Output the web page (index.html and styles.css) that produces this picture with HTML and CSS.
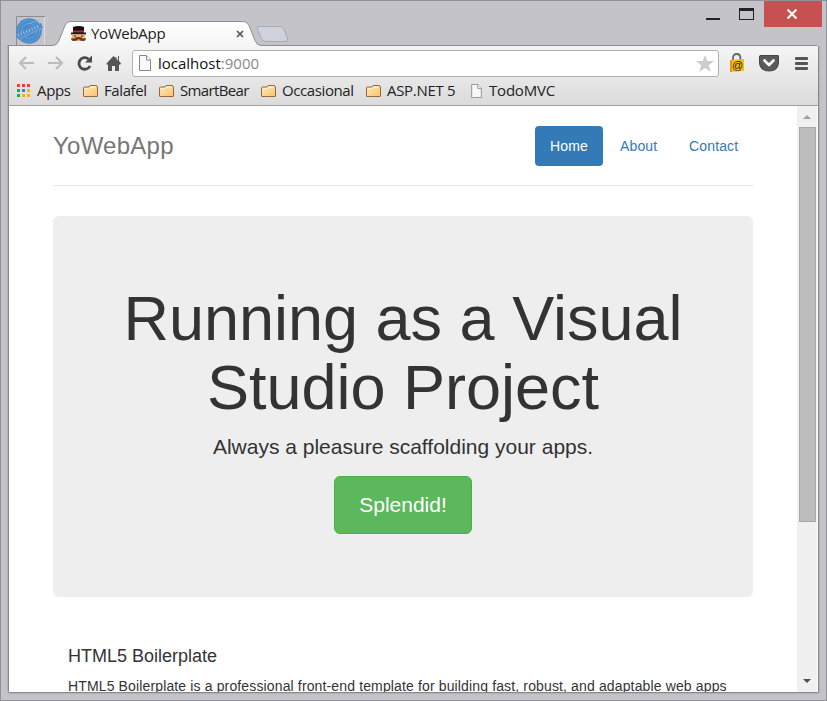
FILE: index.html
```html
<!DOCTYPE html>
<html lang="en">
<head>
<meta charset="utf-8">
<title>YoWebApp</title>
<link rel="stylesheet" href="styles.css">
</head>
<body>
<svg class="defs" width="0" height="0">
  <defs>
    <linearGradient id="fold" x1="0" y1="0" x2="1" y2="1"><stop offset="0" stop-color="#ffe9b8"/><stop offset="1" stop-color="#f9c36d"/></linearGradient>
    <linearGradient id="tabfill" x1="0" y1="0" x2="0" y2="1"><stop offset="0" stop-color="#fff"/><stop offset="1" stop-color="#f5f5f5"/></linearGradient>
    <symbol id="folder" viewBox="0 0 16 14"><path d="M.5 12V4q0-1 1-1h4.500l1-1.500h6q1 0 1 1V3h.5v9q0 .5-.5.500H1q-.5 0-.5-.5z" fill="url(#fold)" stroke="#94683f"/><path d="M1.500 4.500H6L7.500 3H13" fill="none" stroke="#fff4d5"/></symbol>
    <symbol id="page" viewBox="0 0 12 16"><path d="M.5.500h7l4 4.500v10.500H.5z" fill="#f8f8f8" stroke="#888"/><path d="M7.500.500v4.500h4" fill="#fff" stroke="#888"/></symbol>
  </defs>
</svg>
<div class="window">
  <header class="titlebar">
    <svg class="tabshape" width="825" height="46" viewBox="1 1 825 46">
      <path d="M259 26.500h21q3 0 4 3l3.500 8.500q1 3.500-2 3.500h-20q-3 0-4-3l-4-9q-1-3 1.500-3z" fill="#ced2da" stroke="#aaa9b0"/>
      <path d="M8 47V45.500H53q4 0 6-5l6-15q1.500-4 5-4H243.500q4 0 5.500 4l6 15q2 5 6 5H817V47z" fill="url(#tabfill)" stroke="#8e8d94"/>
    </svg>
    <svg class="avatar" width="29" height="29" viewBox="0 0 29 29">
      <path d="M.5 29V.5H29" fill="none" stroke="#8d8c92"/><path d="M28.500 1v28" stroke="#dedde2"/>
      <circle cx="13" cy="15" r="12.800" fill="#4c8bcc"/>
      <g fill="none" stroke="#6da3d8" stroke-width=".8"><circle cx="13" cy="15" r="10.500" stroke-dasharray="2 1"/><circle cx="13" cy="15" r="7.500"/></g>
      <path d="M0 20L25 7l2 5L3 24z" fill="#4c8bcc"/><path d="M12 8L24 4M3 23L26 12" stroke="#8fb8df" stroke-width=".7"/><path d="M2 19.500L24 9.500" stroke="#a9c7e4" stroke-width="3" stroke-dasharray="1 2"/>
    </svg>
    <div class="tab">
      <svg width="16" height="16" viewBox="0 0 16 16"><path d="M2 1q6-2 11 0v6H2z" fill="#111"/><path d="M2 4.500h11v2H2z" fill="#d31632"/><path d="M0 6.500h15v2H0z" fill="#241a18"/><path d="M1 8.500h13V15H1z" fill="#edb171"/><path d="M3 9.500h2v1H3zM10 9.500h2v1h-2z" fill="#333"/><path d="M7.500 11Q5 10.500 4 12q-2 1-4 0 0 3 3 3 3 0 4.500-2Q9 15 12 15q3 0 3-3-2 1-4 0-1-1.500-3.500-1z" fill="#713520"/></svg>
      <span class="tabtitle">YoWebApp</span>
      <svg class="tabclose" width="8" height="8" viewBox="0 0 8 8"><path d="M1 1l6 6M7 1L1 7" stroke="#555" stroke-width="1.700"/></svg>
    </div>
    <div class="controls">
      <i class="min"></i><i class="max"></i>
      <div class="close"><svg width="12" height="10" viewBox="0 0 12 10"><path d="M1.500.500l9 9M10.500.500l-9 9" stroke="#fff" stroke-width="2.100"/></svg></div>
    </div>
  </header>
  <section class="frame">
    <div class="chrome">
      <div class="toolbar">
        <svg class="navicons" width="104" height="18" viewBox="0 0 104 18">
          <g fill="none" stroke="#bcbcbc" stroke-width="2.200"><path d="M2 9h14M8 3L2 9l6 6M30 9h13M38 3l6 6-6 6"/></g>
          <path d="M70.500 5A5.800 5.800 0 1 0 72 12" fill="none" stroke="#4b4b4b" stroke-width="2.800"/><path d="M74 1.500v7h-7z" fill="#4b4b4b"/>
          <path d="M88.500 9.500L95.500 2l2 2V3h1v2l1.500 1.500V2h1v5l2 2.500-1 1.500-1-.8V17h-4v-5h-3v5h-4v-6.800l-1 .8z" fill="#555"/>
        </svg>
        <div class="address">
          <svg width="12" height="16"><use href="#page"/></svg>
          <span class="url">localhost<span>:9000</span></span>
          <svg class="star" width="18" height="17" viewBox="0 0 18 17"><path d="M9 0l2.300 6H18l-5.300 4.200 2 6.500L9 13l-5.700 3.700 2-6.500L0 6h6.700z" fill="#ccc"/></svg>
        </div>
        <svg class="lock" width="16" height="20" viewBox="0 0 16 20"><path d="M4 8V5q0-4 3.700-4t3.700 4v3" fill="none" stroke="#666" stroke-width="1.800"/><path d="M1 7l14-1v12L1 19z" fill="#f6bd10"/><path d="M1 7l2 0v12H1z" fill="#d8a000"/><text x="3" y="16" font-family="Liberation Sans" font-size="11" fill="#222">@</text></svg>
        <svg class="pocket" width="20" height="17" viewBox="0 0 20 17"><path d="M1 .5h18q.5 0 .5.500v6q0 9-9.500 9T.5 7V1z" fill="#59595b" stroke="#454547"/><path d="M5.500 5.500L10 10l4.500-4.500" fill="none" stroke="#fff" stroke-width="2.700" stroke-linecap="round" stroke-linejoin="round"/></svg>
        <svg class="menu" width="13" height="13" viewBox="0 0 13 13"><g fill="#555"><rect width="13" height="3" rx="1"/><rect y="5" width="13" height="3" rx="1"/><rect y="10" width="13" height="3" rx="1"/></g></svg>
      </div>
      <nav class="bookmarks">
        <a class="b1"><svg width="13" height="13" viewBox="0 0 13 13"><path d="M0 0h3v3H0zM5 0h3v3H5zM10 0h3v3h-3z" fill="#ee4038"/><path d="M0 5h3v3H0zM0 10h3v3H0z" fill="#2e9e5b"/><path d="M5 5h3v3H5z" fill="#2a85f0"/><path d="M10 5h3v3h-3zM5 10h3v3H5zM10 10h3v3h-3z" fill="#f9b208"/></svg><span>Apps</span></a>
        <a class="b2"><svg width="16" height="14"><use href="#folder"/></svg><span>Falafel</span></a>
        <a class="b3"><svg width="16" height="14"><use href="#folder"/></svg><span>SmartBear</span></a>
        <a class="b4"><svg width="16" height="14"><use href="#folder"/></svg><span>Occasional</span></a>
        <a class="b5"><svg width="16" height="14"><use href="#folder"/></svg><span>ASP.NET 5</span></a>
        <a class="b6"><svg width="11" height="14"><use href="#page"/></svg><span>TodoMVC</span></a>
      </nav>
    </div>
    <div class="viewport">
      <main class="page">
        <div class="header">
          <h3>YoWebApp</h3>
          <ul class="pills"><li class="active">Home</li><li>About</li><li>Contact</li></ul>
        </div>
        <div class="jumbotron">
          <h1>Running as a Visual<br>Studio Project</h1>
          <p>Always a pleasure scaffolding your apps.</p>
          <a class="btn">Splendid!</a>
        </div>
        <div class="marketing">
          <h4>HTML5 Boilerplate</h4>
          <p>HTML5 Boilerplate is a professional front-end template for building fast, robust, and adaptable web apps</p>
        </div>
      </main>
      <div class="scroll">
        <svg width="8" height="4" viewBox="0 0 8 4"><path d="M0 4l4-4 4 4z" fill="#a0a0a0"/></svg>
        <div class="thumb"></div>
        <svg class="down" width="8" height="4" viewBox="0 0 8 4"><path d="M0 0h8L4 4z" fill="#505050"/></svg>
      </div>
    </div>
  </section>
</div>
</body>
</html>
```

FILE: styles.css
```css
* { box-sizing: border-box; }
body { margin: 0; overflow: hidden; font-family: "Liberation Sans", Arial, sans-serif; color: #333; }
svg { display: block; flex: none; }
.defs { position: absolute; }
.window { width: 827px; height: 701px; border: 1px solid #929197; background: #c5c3ca; }
.titlebar { position: relative; display: flex; height: 45px; padding-left: 15px; }
.tabshape { position: absolute; left: 0; top: 0; }
.avatar { margin-top: 15px; position: relative; }
.tab { position: relative; display: flex; align-items: center; margin: 21px 0 0 26px; width: 174px; height: 24px; }
.tabtitle { font: 15px/20px "Open Sans", sans-serif; letter-spacing: -.3px; margin: 0 0 3px 4px; color: #222; white-space: nowrap; }
.tabclose { margin: 0 1px 0 auto; }
.controls { position: relative; display: flex; margin-left: auto; }
.min { width: 14px; height: 2px; margin: 17px 19px 0 0; background: #222; }
.max { width: 15px; height: 12px; margin: 7px 10px 0 0; border: 1px solid #222; border-top-width: 3px; }
.close { display: grid; place-items: center; width: 58px; height: 26px; background: #c75050; margin-right: 4px; padding-right: 2px; }
.frame { position: relative; margin: 0 7px; height: 647px; border: 1px solid #89888d; border-top: 0; box-shadow: 0 0 2px #85848a; clip-path: inset(0 -3px -3px -3px); display: flex; flex-direction: column; border-radius: 0 0 2px 2px; }
.chrome { height: 60px; background: linear-gradient(#f5f5f5, #dbdbdb); border-bottom: 1px solid #a2a2a2; flex: none; }
.toolbar { display: flex; align-items: center; height: 32px; padding: 2px 0 0 9px; }
.navicons { overflow: visible; }
.address { display: flex; align-items: center; width: 587px; height: 27px; margin-left: 10px; padding: 0 4px 0 6px; border: 1px solid #b1b1b1; border-radius: 3px; background: #fff; }
.url { font: 15px/20px "Open Sans", sans-serif; margin-left: 7px; color: #111; }
.url span { color: #888; }
.star { margin: 0 0 0 auto; }
.lock { margin: 0 0 1px 10px; }
.pocket { margin-left: 14px; }
.menu { margin-left: 16px; }
.bookmarks { display: flex; height: 26px; padding-left: 8px; font: 15px/20px "Open Sans", sans-serif; color: #222; }
.bookmarks a { display: flex; align-items: center; white-space: nowrap; }
.b1 { width: 66px; letter-spacing: -.35px; }
.b2 { width: 76px; letter-spacing: -.4px; }
.b3 { width: 102px; letter-spacing: -.65px; }
.b4 { width: 105px; letter-spacing: -.4px; }
.b5 { width: 105px; letter-spacing: -.3px; }
.b6 { letter-spacing: -.2px; }
.b1 svg { margin-bottom: 2px; }
.bookmarks span { margin: 0 0 2px 5px; }
.b1 span { margin-left: 7px; }
.b6 span { margin-left: 7px; }
.viewport { display: flex; flex: 1; min-height: 0; overflow: hidden; background: #fff; }
.page { flex: 1; min-width: 0; padding: 20px 44px 0; }
.header { display: flex; justify-content: space-between; height: 60px; border-bottom: 1px solid #e5e5e5; }
h3 { margin: 0; font-size: 24px; line-height: 40px; font-weight: 400; color: #777; letter-spacing: .25px; }
.pills { display: flex; gap: 2px; margin: 0; padding: 0; list-style: none; font-size: 14px; line-height: 20px; letter-spacing: .15px; }
.pills li { width: 67px; height: 40px; padding: 10px 0 10px 15px; border-radius: 4px; color: #337ab7; }
.pills .active { width: 68px; background: #337ab7; color: #fff; }
.pills li:last-child { width: 79px; }
.jumbotron { height: 381px; margin-top: 30px; padding-top: 68px; border-radius: 6px; background: #eee; text-align: center; }
h1 { margin: 0 0 9px; font-size: 63px; line-height: 69.3px; font-weight: 400; white-space: nowrap; }
.jumbotron p { margin: 0 0 14px; font-size: 21px; line-height: 30px; }
.btn { display: inline-block; width: 138px; height: 58px; border: 1px solid #4cae4c; border-radius: 6px; background: #5cb85c; color: #fff; font-size: 21px; line-height: 56px; }
.marketing { padding: 49px 15px 0; }
h4 { margin: 0 0 10px; font-size: 18px; line-height: 20px; font-weight: 400; }
.marketing p { margin: 0; font-size: 14px; line-height: 20px; letter-spacing: .138px; white-space: nowrap; }
.scroll { display: flex; flex: none; flex-direction: column; align-items: center; width: 21px; background: #f0f0f0; padding: 9px 0; border-right: 1px solid #fff; }
.thumb { width: 17px; height: 395px; margin-top: 8px; border: 1px solid #a8a8a8; background: #bcbcbc; }
.down { margin-top: auto; }
```
